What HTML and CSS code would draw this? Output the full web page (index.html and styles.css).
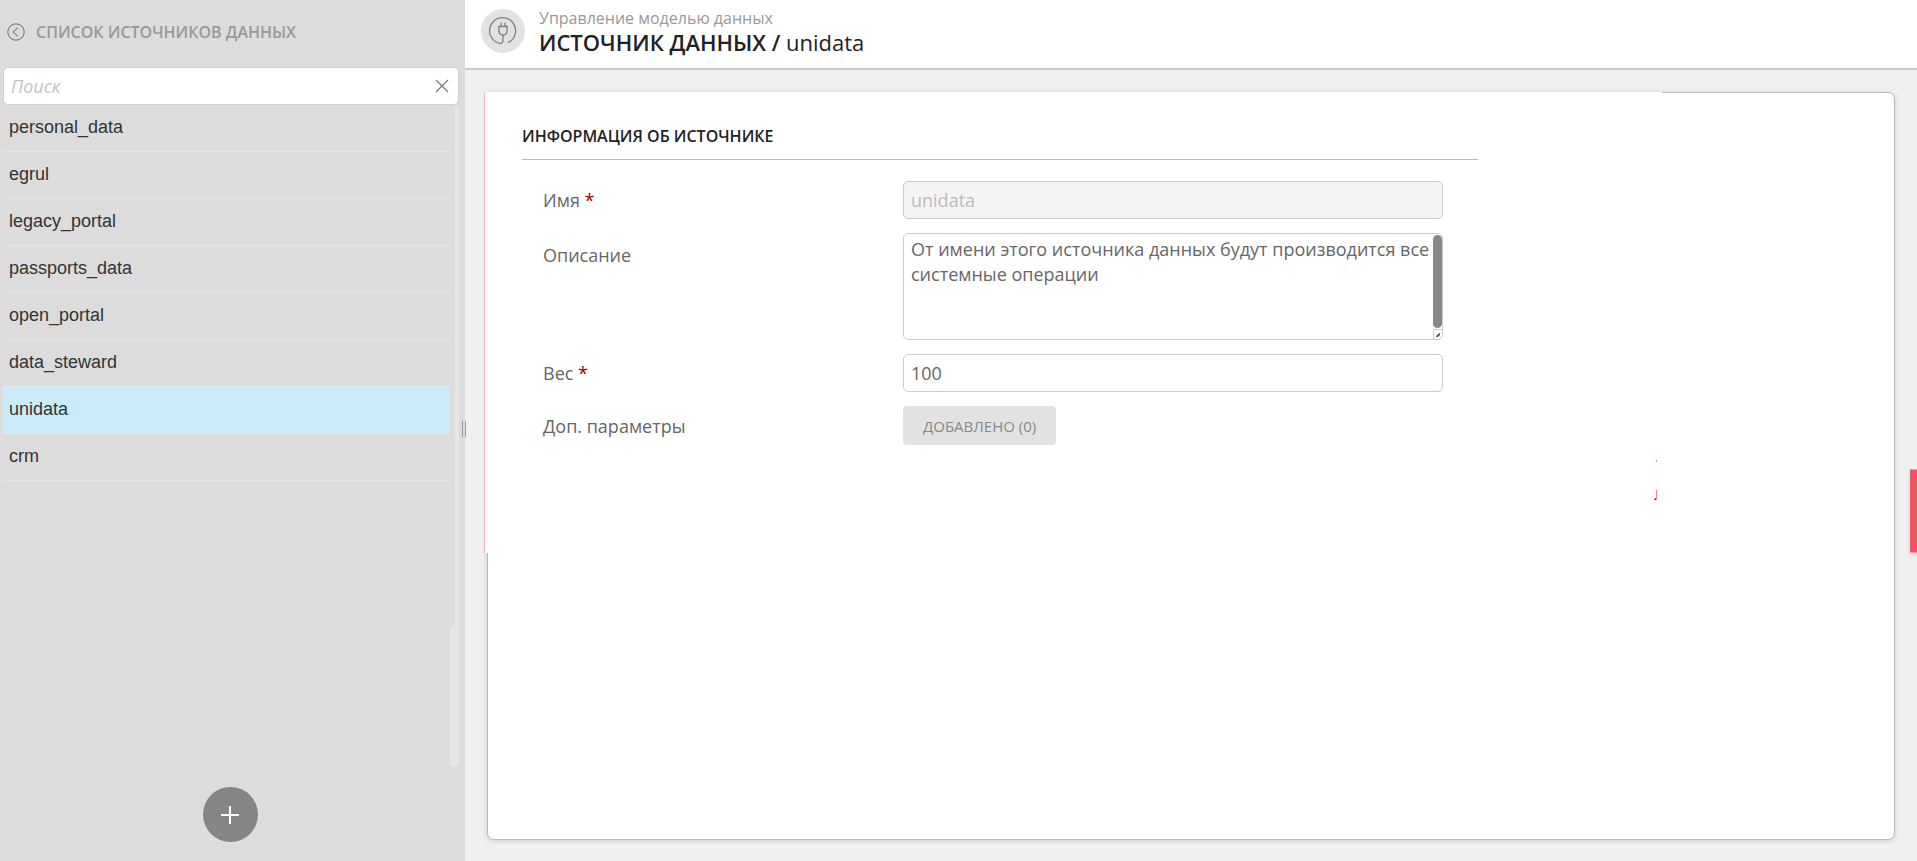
FILE: index.html
```html
<!DOCTYPE html>
<html lang="ru">
<head>
<meta charset="utf-8">
<title>Источник данных</title>
<link rel="stylesheet" href="styles.css">
</head>
<body>
<div class="app">
  <aside class="sidebar">
    <header class="sidebar-head">
      <button class="icon-button" type="button" aria-label="Свернуть">
        <svg width="18" height="18" viewBox="0 0 18 18" fill="none" stroke="#666"><circle cx="9" cy="9" r="8.2"/><path d="M11 4.5 6 9l5 4.5"/></svg>
      </button>
      <h2 class="sidebar-title">СПИСОК ИСТОЧНИКОВ ДАННЫХ</h2>
    </header>
    <div class="search">
      <input class="search-input" type="text" placeholder="Поиск" aria-label="Поиск">
      <button class="icon-button" type="button" aria-label="Очистить">
        <svg width="14" height="14" viewBox="0 0 14 14" fill="none" stroke="#777" stroke-width="1.2"><path d="m1 1 12 12M13 1 1 13"/></svg>
      </button>
    </div>
    <div class="list-area">
      <nav class="list">
        <a class="item" href="#">personal_data</a>
        <a class="item" href="#">egrul</a>
        <a class="item" href="#">legacy_portal</a>
        <a class="item" href="#">passports_data</a>
        <a class="item" href="#">open_portal</a>
        <a class="item" href="#">data_steward</a>
        <a class="item item-active" href="#">unidata</a>
        <a class="item" href="#">crm</a>
      </nav>
      <div class="list-scroll"><div class="list-track"></div><div class="list-thumb"></div></div>
    </div>
    <footer class="sidebar-foot">
      <button class="add" type="button" aria-label="Добавить">
        <svg width="18" height="18" viewBox="0 0 18 18" stroke="#fff" stroke-width="2"><path d="M9 0v18M0 9h18"/></svg>
      </button>
    </footer>
    <div class="splitter"></div>
  </aside>
  <main class="main">
    <header class="page-head">
      <span class="avatar">
        <svg width="28" height="30" viewBox="0 0 28 30" fill="none" stroke="#808080" stroke-width="1.3"><path d="M19 26.500A13 13 0 1 0 9.500 27C12.500 28.300 14 26.500 14 24V19.500M9 10.500h10M10 10.500v4.500a4 4 0 0 0 3.500 4h1a4 4 0 0 0 3.500-4v-4.500M12 10V6.500M16 10V6.500"/></svg>
      </span>
      <div>
        <p class="crumb">Управление моделью данных</p>
        <h1 class="page-title"><span class="strong">ИСТОЧНИК ДАННЫХ /</span> unidata</h1>
      </div>
    </header>
    <div class="content">
      <section class="panel">
        <div class="outline"></div>
        <form class="form">
          <h3 class="form-title">ИНФОРМАЦИЯ ОБ ИСТОЧНИКЕ</h3>
          <div class="fields">
            <label class="label" for="name">Имя <span class="req">*</span></label>
            <input class="field" id="name" type="text" value="unidata" disabled>
            <label class="label label-top" for="desc">Описание</label>
            <div class="area-wrap">
              <textarea class="field area" id="desc">От имени этого источника данных будут производится все системные операции</textarea>
              <span class="area-thumb"></span>
              <svg class="area-grip" width="10" height="10" viewBox="0 0 10 10"><path d="M.5 10V.5H10" fill="none" stroke="#ccc"/><path d="M3 8c0-2 2-3 4-4v2L5 8z" fill="#555"/></svg>
            </div>
            <label class="label" for="weight">Вес <span class="req">*</span></label>
            <input class="field" id="weight" type="text" value="100">
            <label class="label" for="params">Доп. параметры</label>
            <button class="button" id="params" type="button">ДОБАВЛЕНО (0)</button>
          </div>
        </form>
        <svg class="mark" width="3" height="40" viewBox="0 0 3 40"><path d="M2.500 0v2M2.500 30v10" stroke="#f5858c"/><path d="M0 39.500h2M1.500 38v2" stroke="#c22"/></svg>
      </section>
    </div>
    <div class="side-tab"></div>
  </main>
</div>
</body>
</html>
```
FILE: styles.css
```css
* { box-sizing: border-box; }
body { margin: 0; font-family: "Open Sans", "Noto Sans", sans-serif; font-size: 18px; color: #666; }
h1, h2, h3, p { margin: 0; font-weight: 400; }
button, input, textarea { font: inherit; color: inherit; }
svg { display: block; }
.app { display: grid; grid-template-columns: 465px minmax(0, 1fr); min-height: 100vh; }

.sidebar { position: relative; z-index: 1; display: flex; flex-direction: column; background: #dcdcdc; }
.sidebar-head { display: flex; align-items: center; gap: 11px; height: 67px; padding: 0 7px 4px; }
.icon-button { padding: 0; border: 0; background: none; }
.sidebar-title { font-size: 16px; font-weight: 600; color: #999; }
.search { display: flex; align-items: center; height: 38px; margin: 0 6px 0 3px; padding: 0 9px 0 7px; background: #fff; border: 1px solid #d0d0d0; border-radius: 5px; }
.search-input { flex: 1; min-width: 0; padding: 0; border: 0; outline: 0; background: none; font-style: italic; }
.search-input::placeholder { color: #c4c4c4; }
.list-area { flex: 1; display: flex; justify-content: space-between; margin: 0 6px 0 3px; }
.list { flex: 1; }
.item { display: flex; align-items: center; height: 47px; padding: 0 6px 1px; border-bottom: 1px solid #e6e6e6; font-family: "Liberation Sans", Arial, sans-serif; color: #333; text-decoration: none; }
.item-active { background: #cbebf8; }
.list-scroll { display: flex; flex-direction: column; align-items: flex-end; width: 9px; padding-top: 2px; }
.list-track { flex: 1; width: 4px; background: #e6e6e6; }
.list-thumb { width: 9px; height: 142px; border-radius: 5px 0 5px 5px; background: #e6e6e6; }
.sidebar-foot { display: flex; justify-content: center; height: 94px; padding: 20px 5px 0 0; }
.add { display: grid; place-items: center; width: 55px; height: 55px; padding: 0; border: 0; border-radius: 50%; background: #858585; }
.splitter { position: absolute; right: -1px; top: 421px; width: 4px; height: 16px; border: solid #999; border-width: 0 1px; }

.main { position: relative; display: flex; flex-direction: column; background: #f0f0f0; }
.page-head { display: flex; align-items: flex-start; gap: 14px; height: 70px; padding: 7px 16px 0; background: #fff; border-bottom: 2px solid #ccc; }
.avatar { display: grid; place-items: center; width: 44px; height: 44px; margin-top: 2px; border-radius: 50%; background: #e2e2e2; }
.crumb { font-size: 16px; line-height: 22px; color: #999; }
.page-title { font-size: 22px; line-height: 26px; color: #222; }
.strong { font-weight: 600; }
.content { flex: 1; display: flex; padding: 22px 22px 21px; }
.panel { position: relative; flex: 1; padding: 30px 34px; background: #fff; border: 1px solid #bbb; border-radius: 7px; box-shadow: 0 1px 5px #ccc; }
.outline { position: absolute; left: -4px; top: -1px; width: 1178px; height: 461px; background: #fff; border-left: 1px solid #f5b5bb; }
.mark { position: absolute; left: 1166px; top: 367px; }
.form { position: relative; max-width: 956px; }
.form-title { height: 37px; line-height: 26px; border-bottom: 1px solid #bbb; font-size: 16px; font-weight: 600; color: #222; }
.fields { display: grid; grid-template-columns: 360px minmax(0, 1fr); gap: 14px 0; padding: 21px 35px 0 21px; align-items: center; justify-items: start; }
.label-top { align-self: start; padding-top: 10px; }
.req { color: #900; }
.field { display: block; width: 100%; height: 38px; padding: 0 7px; border: 1px solid #ccc; border-radius: 5px; background: #fff; outline: 0; }
.field:disabled { background: #f4f4f4; color: #bbb; }
.area-wrap { position: relative; width: 100%; }
.area { height: 107px; padding: 3px 4px 0 7px; line-height: 25px; resize: none; overflow: hidden; }
.area-thumb { position: absolute; right: 1px; top: 2px; width: 9px; height: 93px; border-radius: 5px; background: #888; }
.area-grip { position: absolute; right: 0; bottom: 1px; }
.button { height: 39px; padding: 0 20px; border: 0; border-radius: 4px; background: #e2e2e2; color: #888; font-size: 15px; }
.side-tab { position: absolute; right: 0; top: 469px; width: 7px; height: 84px; background: #ed5565; border: solid #f49aa3; border-width: 1px 0; box-shadow: 0 2px 4px #ccc; }
```
